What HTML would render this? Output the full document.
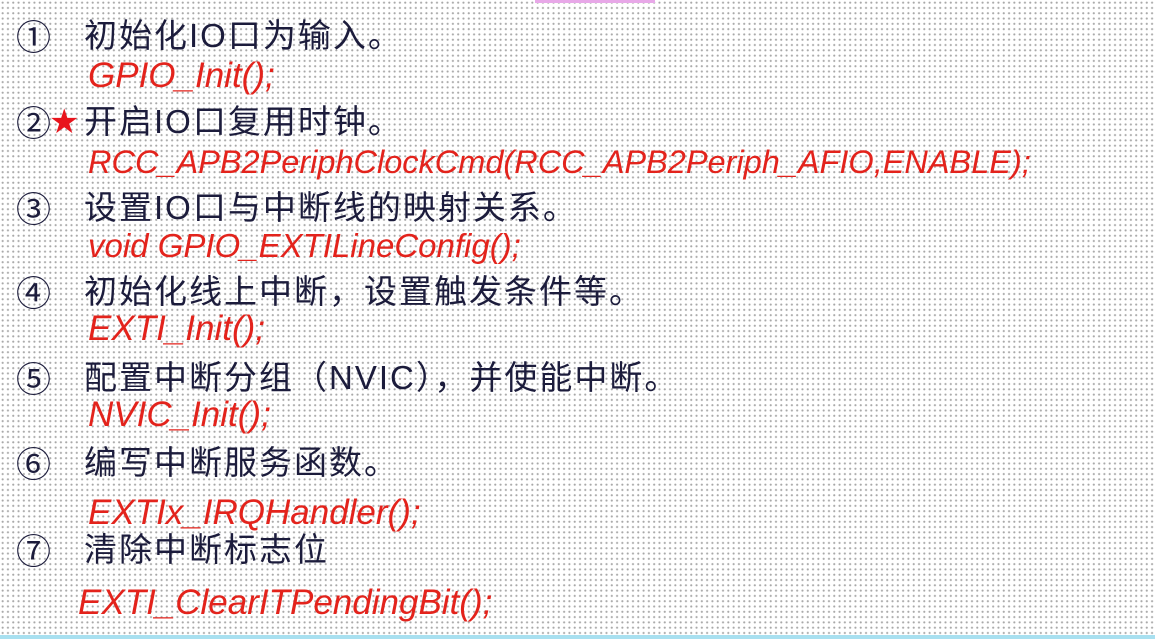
<!DOCTYPE html>
<html><head><meta charset="utf-8"><style>
html,body{margin:0;padding:0}
body{width:1155px;height:639px;position:relative;overflow:hidden;background-color:#fff;
background-image:radial-gradient(circle,#a8a8a8 0.8px,transparent 1.3px);background-size:5.3px 5.3px;}
.k{position:absolute;left:84px;font-family:"Liberation Sans","Noto Sans CJK SC",sans-serif;font-size:33px;color:#1c1c3c;line-height:36px;white-space:nowrap;letter-spacing:2px}
.n{position:absolute;left:16px;font-family:"Noto Sans CJK SC",sans-serif;font-size:35px;color:#1c1c3c;line-height:36px}
.r{position:absolute;left:88px;font-family:"Liberation Sans",sans-serif;font-style:italic;font-size:35px;color:#e3231c;line-height:36px;white-space:nowrap}
</style></head><body>
<div style="position:absolute;left:535px;top:0;width:120px;height:3px;background:#e8a8e8"></div>
<div style="position:absolute;left:0;top:635px;width:1155px;height:4px;background:#a8e0f0"></div>
<div class="n" style="top:18px">①</div><div class="k" style="top:18px">初始化IO口为输入。</div>
<div class="r" style="top:58px">GPIO_Init();</div>
<div class="n" style="top:104px">②</div><div style="position:absolute;left:49px;top:102px;font-size:34px;line-height:40px;color:#e8141c;font-family:'DejaVu Sans',sans-serif">★</div><div class="k" style="top:104px">开启IO口复用时钟。</div>
<div class="r" style="top:144px;font-size:32.5px">RCC_APB2PeriphClockCmd(RCC_APB2Periph_AFIO,ENABLE);</div>
<div class="n" style="top:190px">③</div><div class="k" style="top:190px">设置IO口与中断线的映射关系。</div>
<div class="r" style="top:228px;font-size:33px">void GPIO_EXTILineConfig();</div>
<div class="n" style="top:274px">④</div><div class="k" style="top:274px">初始化线上中断，设置触发条件等。</div>
<div class="r" style="top:311px">EXTI_Init();</div>
<div class="n" style="top:360px">⑤</div><div class="k" style="top:360px">配置中断分组（NVIC），并使能中断。</div>
<div class="r" style="top:397px">NVIC_Init();</div>
<div class="n" style="top:445px">⑥</div><div class="k" style="top:445px">编写中断服务函数。</div>
<div class="r" style="top:495px">EXTIx_IRQHandler();</div>
<div class="n" style="top:532px">⑦</div><div class="k" style="top:532px">清除中断标志位</div>
<div class="r" style="top:585px;left:78px">EXTI_ClearITPendingBit();</div>
</body></html>
